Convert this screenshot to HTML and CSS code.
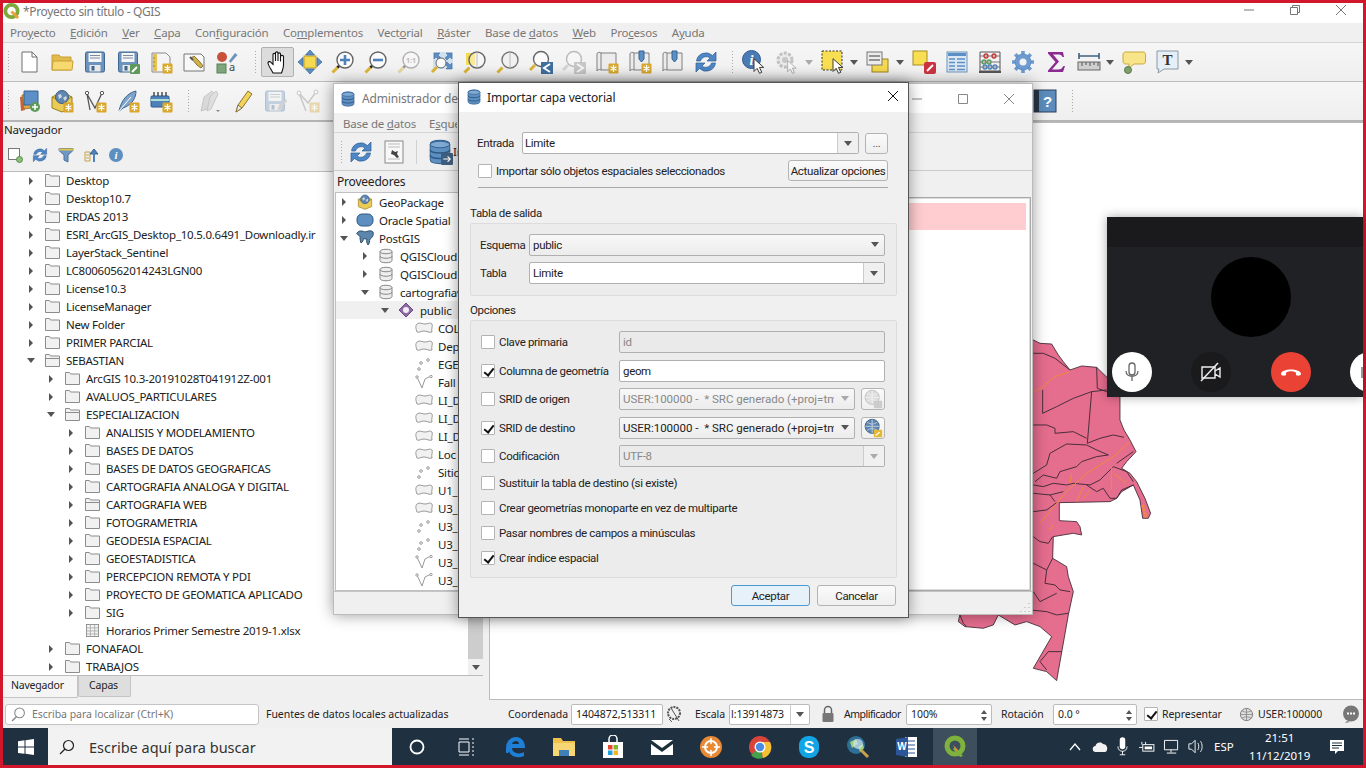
FILE: index.html
```html
<!DOCTYPE html>
<html lang="es">
<head>
    <meta charset="UTF-8">
    <title>*Proyecto sin título - QGIS</title>
    <link rel="stylesheet" href="styles.css">
</head>
<body>
<svg class="defs" xmlns="http://www.w3.org/2000/svg">
    <symbol id="badge-star" viewBox="0 0 24 24"><rect x="13.500" y="13.500" width="10" height="10" rx="1" fill="#d8a72c"/><path d="M18.500 15v7M15.500 16.700l6 3.600M21.500 16.700l-6 3.600" stroke="#fff" stroke-width="1.300"/></symbol>
    <symbol id="new" viewBox="0 0 24 24"><path d="M5 2h10l5 5v15H5z" fill="#fff" stroke="#6e6e6e"/><path d="M15 2v5h5" fill="none" stroke="#6e6e6e"/></symbol>
    <symbol id="open" viewBox="0 0 24 24"><path d="M2 20V5h7l2 2h10v13z" fill="#e3bb4b" stroke="#c79f36"/><path d="M2 20l1-9h19l1 0-1 9z" fill="#f6d96f" stroke="#c79f36"/></symbol>
    <symbol id="save" viewBox="0 0 24 24"><rect x="2.500" y="2" width="19" height="20" rx="1.500" fill="#6b93bd" stroke="#3f668f"/><rect x="5.500" y="3" width="13" height="9" fill="#f5f5f5"/><path d="M7 5.500h10M7 8h10" stroke="#7d8b99"/><rect x="6.500" y="15" width="11" height="6.500" fill="#e8e8e8"/><rect x="8.500" y="16" width="3" height="4.500" fill="#3f668f"/></symbol>
    <symbol id="saveas" viewBox="0 0 24 24"><use href="#save"/><rect x="14" y="14" width="10" height="10" rx="1" fill="#5f9a5a"/><path d="M16 22l5-5" stroke="#fff" stroke-width="1.800"/></symbol>
    <symbol id="layout-new" viewBox="0 0 24 24"><path d="M3 3h14l4 4v15H3z" fill="#f4f4f4" stroke="#8a8a8a"/><path d="M4 4h4v17H4z" fill="#e7c350"/><path d="M4 8h2M4 12h2M4 16h2" stroke="#a8862c"/><use href="#badge-star"/></symbol>
    <symbol id="layout-mgr" viewBox="0 0 24 24"><path d="M2 4h17l3 3v14H2z" fill="#f8f8f8" stroke="#777"/><path d="M9 8l6 7 4 3 2-2-3-4-6-6z" fill="#d2b24c" stroke="#8a7333"/><path d="M8 7l3 3" stroke="#555" stroke-width="2"/></symbol>
    <symbol id="hand" viewBox="0 0 24 24"><path d="M8 23C6 19 2.500 14.500 3 12.500 3.500 11 5.500 11.500 6.500 13L8 14.500V4.500C8 3 10.500 3 10.500 4.500V11 3C10.500 1.500 13 1.500 13 3V11 4C13 2.500 15.500 2.500 15.500 4V11.500 6.500C15.500 5 18.500 5 18.500 6.500V15C18.500 18 17.500 20 16.500 23Z" fill="#fff" stroke="#111" stroke-width="1.100"/></symbol>
    <symbol id="pan-sel" viewBox="0 0 24 24"><rect x="6" y="6" width="12" height="12" fill="#f5d94e" stroke="#b99c2c"/><path d="M12 0l4.500 5h-9zM12 24l4.500-5h-9zM0 12l5-4.500v9zM24 12l-5-4.500v9z" fill="#5d8fc7" stroke="#34628f" stroke-width=".7"/></symbol>
    <symbol id="lens" viewBox="0 0 24 24"><circle cx="14" cy="10" r="8" fill="#fbfbfb" stroke="#666" stroke-width="1.400"/><path d="M8 16l-2 2" stroke="#222" stroke-width="2.500"/><path d="M6.500 17.500L1.500 22.500" stroke="#d9b437" stroke-width="3"/></symbol>
    <symbol id="zoom-in" viewBox="0 0 24 24"><use href="#lens"/><path d="M14 5v10M9 10h10" stroke="#4f82bb" stroke-width="2.600"/></symbol>
    <symbol id="zoom-out" viewBox="0 0 24 24"><use href="#lens"/><path d="M9 10h10" stroke="#4f82bb" stroke-width="2.600"/></symbol>
    <symbol id="zoom-full" viewBox="0 0 24 24"><path d="M3 2h20v17H3z" fill="#cfe0f0"/><path d="M4 3h6l-2 2 3 3-2 2-3-3-2 2zM22 3h-6l2 2-3 3 2 2 3-3 2 2zM22 19h-6l2-2-3-3 2-2 3 3 2-2z" fill="#5d8fc7" stroke="#34628f" stroke-width=".5"/><circle cx="11" cy="13" r="5" fill="#fbfbfb" stroke="#666"/><path d="M7 17l-5 5" stroke="#d9b437" stroke-width="3"/></symbol>
    <symbol id="zoom-sel" viewBox="0 0 24 24"><rect x="3" y="3" width="9" height="12" fill="#f5d94e"/><circle cx="14" cy="10" r="8" fill="#fbfbfb" fill-opacity=".45" stroke="#666" stroke-width="1.400"/><path d="M14 2v16" stroke="#bbb"/><path d="M6.500 17.500L1.500 22.500" stroke="#d9b437" stroke-width="3"/></symbol>
    <symbol id="zoom-layer" viewBox="0 0 24 24"><circle cx="14" cy="10" r="8" fill="#f1f1f1" stroke="#777" stroke-width="1.400"/><path d="M14 2v16" stroke="#bbb"/><path d="M6.500 17.500L1.500 22.500" stroke="#d9b437" stroke-width="3"/></symbol>
    <symbol id="zoom-last" viewBox="0 0 24 24"><circle cx="12" cy="9" r="7.500" fill="#fbfbfb" stroke="#666" stroke-width="1.400"/><path d="M6 15L1 20" stroke="#d9b437" stroke-width="3"/><rect x="12" y="12" width="12" height="12" fill="#3f6f9f"/><path d="M21 14l-6 4 6 4" fill="none" stroke="#fff" stroke-width="2"/></symbol>
    <symbol id="zoom-next" viewBox="0 0 24 24"><g opacity=".4"><circle cx="12" cy="9" r="7.500" fill="#fbfbfb" stroke="#666" stroke-width="1.400"/><path d="M6 15L1 20" stroke="#aaa" stroke-width="3"/><rect x="12" y="12" width="12" height="12" fill="#888"/><path d="M15 14l6 4-6 4" fill="none" stroke="#fff" stroke-width="2"/></g></symbol>
    <symbol id="scroll" viewBox="0 0 24 24"><path d="M2 4c0-2 3-2 4-1h15v17H6c-2-1-4 0-4 1z" fill="#ececec" stroke="#808080"/><path d="M6 3v17" stroke="#808080"/></symbol>
    <symbol id="scroll-new" viewBox="0 0 24 24"><use href="#scroll"/><use href="#badge-star"/></symbol>
    <symbol id="scroll-pin" viewBox="0 0 24 24"><use href="#scroll"/><path d="M11 1h5v8l-2.500 3-2.500-3z" fill="#5d8fc7" stroke="#34628f"/></symbol>
    <symbol id="scroll-pin-new" viewBox="0 0 24 24"><use href="#scroll-pin"/><use href="#badge-star"/></symbol>
    <symbol id="refresh" viewBox="0 0 24 24"><g fill="#4f86c6" stroke="#2f5f96" stroke-width=".7"><path id="rf-arc" d="M2.500 11A9.500 9.500 0 0 1 18.500 5.500L22 2v9h-9l3-3A6 6 0 0 0 6.500 11z"/><use href="#rf-arc" transform="rotate(180 12 12)"/></g></symbol>
    <symbol id="cursor" viewBox="0 0 12 17"><path d="M.7.7v13.600L4 11l2.500 5.300 2.500-1.100L6.500 10H11z" fill="#fff" stroke="#333"/></symbol>
    <symbol id="cog-cursor" viewBox="0 0 24 24"><g opacity=".4"><circle cx="10" cy="10" r="7" fill="#ddd" stroke="#777" stroke-width="3" stroke-dasharray="3 1.500"/><circle cx="10" cy="10" r="3" fill="#888"/><use href="#cursor" x="12" y="10" width="10" height="14"/></g></symbol>
    <symbol id="select" viewBox="0 0 24 24"><rect x="1" y="1" width="20" height="19" fill="#f7de52" stroke="#333" stroke-dasharray="2 1.500"/><use href="#cursor" x="11" y="8" width="12" height="16"/></symbol>
    <symbol id="attr-select" viewBox="0 0 24 24"><rect x="6" y="9" width="16" height="13" fill="#f5d94e" stroke="#9a8420"/><rect x="1" y="2" width="15" height="13" fill="#ececec" stroke="#777"/><path d="M3 6h11M3 10h11" stroke="#777" stroke-width="1.500"/></symbol>
    <symbol id="deselect" viewBox="0 0 24 24"><rect x="1" y="1" width="14" height="14" fill="#f7de52" stroke="#a68c22"/><rect x="12" y="12" width="12" height="12" rx="2" fill="#cb3340"/><path d="M15 21l6-6" stroke="#fff" stroke-width="2"/></symbol>
    <symbol id="table" viewBox="0 0 24 24"><rect x="2" y="2" width="20" height="20" fill="#dbe7f2" stroke="#6c93bb"/><path d="M3 3h18v3H3z" fill="#5d8fc7"/><path d="M4 9h6M4 12.500h6M4 16h6M4 19.500h6M12 9h8M12 12.500h8M12 16h8M12 19.500h8" stroke="#5d8fc7" stroke-width="1.300"/></symbol>
    <symbol id="calc" viewBox="0 0 24 24"><path d="M2 2h20v19H2z" fill="none" stroke="#555"/><path d="M1 22h22" stroke="#555" stroke-width="2"/><path d="M2 6h20M2 12h20M2 17h20" stroke="#777"/><g fill="none" stroke-width="1.300"><circle cx="8" cy="6" r="2" stroke="#c33"/><circle cx="16" cy="6" r="2" stroke="#c33"/><circle cx="6" cy="12" r="2" stroke="#5a9a5a"/><circle cx="11" cy="12" r="2" stroke="#5a9a5a"/><circle cx="7" cy="17" r="2" stroke="#4f82bb"/><circle cx="12" cy="17" r="2" stroke="#4f82bb"/><circle cx="17" cy="17" r="2" stroke="#4f82bb"/></g></symbol>
    <symbol id="gear" viewBox="0 0 24 24"><path d="M12 1v22M1 12h22M4.200 4.200l15.600 15.600M4.200 19.800L19.800 4.200" stroke="#6f9bd0" stroke-width="3.600"/><circle cx="12" cy="12" r="8" fill="#6f9bd0" stroke="#4f7fb8" stroke-width=".6"/><circle cx="12" cy="12" r="3.500" fill="#f2f2f2"/></symbol>
    <symbol id="sigma" viewBox="0 0 24 24"><path d="M4 2h15l1 5h-1.500c-1-2-2-2.500-5-2.500H9l6 7-7 8h6c3 0 4-1 5.500-3.500H21L19 22H4v-1.500l7.500-8.500L4 3.500z" fill="#8c2a92"/></symbol>
    <symbol id="ruler" viewBox="0 0 24 24"><path d="M2 6h20M2 3v6M22 3v6" stroke="#3f5f7f" stroke-width="1.600"/><rect x="1" y="12" width="22" height="8" fill="#cfcfcf" stroke="#666"/><path d="M5 12v4M9 12v3M13 12v4M17 12v3M21 12v4" stroke="#555"/></symbol>
    <symbol id="tip" viewBox="0 0 24 24"><path d="M4 2h17c2 0 2.500 1 2.500 3v6c0 2-1 3-3 3H12l-5 4v-4H4c-2 0-3-1-3-3V5c0-2 1-3 3-3z" fill="#f8e58a" stroke="#c9a93c"/><circle cx="6" cy="20" r="3.500" fill="#7fa06a" stroke="#5a7a4a"/></symbol>
    <symbol id="ds-mgr" viewBox="0 0 24 24"><path d="M3 8l5-1 0 14-4 1z" fill="#c9603a"/><path d="M5 6l13-1 2 13-13 2z" fill="#e0a94a" stroke="#a9782c"/><path d="M7 2l14 0 0 14-14 0z" fill="#5d8fc7" stroke="#34628f"/><circle cx="18" cy="18" r="5" fill="#5f9a5a"/><path d="M18 15v6M15 18h6" stroke="#fff" stroke-width="1.500"/></symbol>
    <symbol id="gpkg" viewBox="0 0 24 24"><path d="M12 3l10 5v11l-10 4-10-4V8z" fill="#e9cb55" stroke="#9a7f22"/><path d="M2 8l10 5 10-5" fill="none" stroke="#9a7f22"/><circle cx="12" cy="8" r="6.500" fill="#5f86b3" stroke="#3f5f80"/><path d="M8 6l3-1 1 3-3 2zM13 9l3-2 1 2-2 3z" fill="#cfd8de"/></symbol>
    <symbol id="gpkg-new" viewBox="0 0 24 24"><use href="#gpkg"/><use href="#badge-star"/></symbol>
    <symbol id="mesh" viewBox="0 0 24 24"><path d="M7 21L4 5l8 14L19 4" fill="none" stroke="#555" stroke-width="1.300"/><circle cx="4" cy="4" r="1.700" fill="#fff" stroke="#555"/><circle cx="19" cy="4" r="1.700" fill="#fff" stroke="#555"/><use href="#badge-star"/></symbol>
    <symbol id="feather" viewBox="0 0 24 24"><path d="M3 22C5 12 11 4 20 2c0 7-4 14-13 17z" fill="#7ea4cc" stroke="#3f668f"/><path d="M3 22L15 8" stroke="#fff"/><use href="#badge-star"/></symbol>
    <symbol id="chip" viewBox="0 0 24 24"><rect x="2" y="7" width="18" height="11" rx="1" fill="#4f82bb" stroke="#2f5a8d"/><path d="M2 11h18" stroke="#cfd" stroke-width="1.500"/><path d="M5 3v4M9 3v4M13 3v4M17 3v4" stroke="#333" stroke-width="1.300"/><use href="#badge-star"/></symbol>
    <symbol id="pencils" viewBox="0 0 24 24"><g opacity=".35"><path d="M4 22l3-14 8-6 2 3-7 15z" fill="#aaa" stroke="#777"/><path d="M10 22l3-14 6-6 2 3-7 15z" fill="#bbb" stroke="#777"/></g><path d="M19 21l2 2 2-2z" fill="#888"/></symbol>
    <symbol id="pencil" viewBox="0 0 24 24"><path d="M6 23l2-7L18 2l4 3-10 14z" fill="#f3d35a" stroke="#8a7333"/><path d="M6 23l2-7 4 3z" fill="#eee" stroke="#8a7333"/></symbol>
    <symbol id="save-edit" viewBox="0 0 24 24"><g opacity=".35"><use href="#save"/><path d="M14 22l2-6 7-6 1 2-6 8z" fill="#999"/></g></symbol>
    <symbol id="vertex" viewBox="0 0 24 24"><g opacity=".35"><path d="M10 22L3 4l9 10 8-11" fill="none" stroke="#777" stroke-width="1.400"/><circle cx="3" cy="4" r="2" fill="#fff" stroke="#777"/><circle cx="20" cy="3" r="2" fill="#fff" stroke="#777"/><use href="#badge-star"/></g></symbol>
    <symbol id="db" viewBox="0 0 24 24"><path d="M3 5c0-5 18-5 18 0v14c0 5-18 5-18 0z" fill="#5d8fc0" stroke="#3a6796"/><ellipse cx="12" cy="5" rx="9" ry="3" fill="#7faad4" stroke="#3a6796"/><path d="M3 10c0 4 18 4 18 0M3 15c0 4 18 4 18 0" fill="none" stroke="#2f5a85" stroke-width="1.400"/></symbol>
    <symbol id="db-import" viewBox="0 0 24 24"><use href="#db"/><rect x="13" y="13" width="11" height="11" rx="1" fill="#3f5f7f"/><path d="M15 18.500h6M19 16l2.500 2.500L19 21" fill="none" stroke="#fff"/></symbol>
    <symbol id="props" viewBox="0 0 24 24"><rect x="3" y="1" width="18" height="22" fill="#f8f8f8" stroke="#888"/><path d="M6 4h12M6 7h12M6 19h12" stroke="#bbb"/><path d="M10 10l3 2 3-1-1 3 2 3-2 1-3-3-3-1z" fill="#444"/></symbol>
    <symbol id="fold" viewBox="0 0 15 13"><path d="M.5 12.500V.5h4l1 1.500h9v10.500z" fill="#f1f1f1" stroke="#8c8c8c"/></symbol>
    <symbol id="fold-open" viewBox="0 0 15 13"><path d="M.5 12.500V.5h4l1 1.500h9v10.500z" fill="#f1f1f1" stroke="#8c8c8c"/><path d="M.5 4.500h14" stroke="#8c8c8c"/></symbol>
    <symbol id="sheet" viewBox="0 0 15 15"><rect x=".5" y=".5" width="14" height="14" fill="#f4f4f4" stroke="#888"/><path d="M1 4.500h13M1 8h13M1 11.500h13M5 1v13M10 1v13" stroke="#aaa"/></symbol>
    <symbol id="cyl" viewBox="0 0 16 16"><path d="M2 3.500c0-3 12-3 12 0v9c0 3-12 3-12 0z" fill="#eee" stroke="#888"/><path d="M2 3.500c0 3 12 3 12 0M2 8c0 3 12 3 12 0" fill="none" stroke="#888"/></symbol>
    <symbol id="poly" viewBox="0 0 18 14"><path d="M2 3c3-2 5 0 8 0s5-2 7 0c1 2-1 5 0 8-3 1-5-1-8-1s-5 2-7 1C1 8 0 5 2 3z" fill="#f1f1f1" stroke="#999"/></symbol>
    <symbol id="pts" viewBox="0 0 18 14"><g fill="#fff" stroke="#999"><circle cx="4" cy="12" r="1.300"/><circle cx="6" cy="6" r="1.300"/><circle cx="13" cy="3" r="1.300"/></g></symbol>
    <symbol id="line" viewBox="0 0 18 14"><path d="M2 2l5 11 3-9 6-3" fill="none" stroke="#999"/><circle cx="2" cy="2" r="1.200" fill="#fff" stroke="#999"/><circle cx="16" cy="1.500" r="1.200" fill="#fff" stroke="#999"/></symbol>
    <symbol id="oracle" viewBox="0 0 18 14"><rect x="1" y="1" width="16" height="12" rx="5" fill="#5d8fc0" stroke="#2f5a85"/></symbol>
    <symbol id="pg" viewBox="0 0 18 16"><path d="M1 3c2-3 6-2 8-1 3-1 6-2 8 0 1 3-1 6-3 7-1 2 0 4-2 6-1-2-2-4-1-6-2 0-3 0-3-1-1 2-1 4-3 5-1-3-1-5-1-7-2-1-4-2-3-3z" fill="#5d86ad" stroke="#2f4f70"/></symbol>
    <symbol id="schema" viewBox="0 0 16 16"><path d="M8 1l7 7-7 7-7-7z" fill="#8e6aa6" stroke="#6a4a80"/><circle cx="8" cy="8" r="3" fill="#f2ecf5"/></symbol>
    <symbol id="globe-pen" viewBox="0 0 24 24"><circle cx="11" cy="10" r="8.500" fill="#5f86b3" stroke="#3f5f80"/><path d="M3 10h17M11 2v16M5 5c4 3 8 3 12 0M5 15c4-3 8-3 12 0" fill="none" stroke="#cfd8de"/><rect x="13" y="14" width="10" height="9" rx="1" fill="#e4b92f"/><path d="M15 21l5-4" stroke="#fff" stroke-width="1.500"/></symbol>
    <symbol id="globe-gray" viewBox="0 0 24 24"><circle cx="11" cy="10" r="8.500" fill="#ddd" stroke="#bbb"/><path d="M3 10h17M11 2v16M5 5c4 3 8 3 12 0M5 15c4-3 8-3 12 0" fill="none" stroke="#f2f2f2"/><rect x="13" y="14" width="10" height="9" rx="1" fill="#ccc"/></symbol>
</svg>

<div class="screen">
    <header class="titlebar">
        <svg class="app-logo" viewBox="0 0 18 18"><circle cx="9" cy="8.500" r="6.500" fill="none" stroke="#7da83a" stroke-width="4"/><path d="M9 9l7 7" stroke="#e8a33a" stroke-width="3"/></svg>
        <span class="app-title">*Proyecto sin título - QGIS</span>
        <div class="win-btns">
            <svg class="main-ctl" viewBox="0 3 46 17"><path d="M18 10h10" stroke="#777"/></svg>
            <svg class="main-ctl" viewBox="0 3 46 17"><path d="M18.500 7.500h7v7h-7zM20.500 7.500v-2h7v7h-2" fill="none" stroke="#777"/></svg>
            <svg class="main-ctl" viewBox="0 3 46 17"><path d="M18 5l10 10M28 5L18 15" stroke="#777"/></svg>
        </div>
    </header>

    <nav class="menubar">
        <span>Pro<u>y</u>ecto</span><span><u>E</u>dición</span><span><u>V</u>er</span><span><u>C</u>apa</span><span>Con<u>f</u>iguración</span><span>Co<u>m</u>plementos</span><span>Vect<u>o</u>rial</span><span><u>R</u>áster</span><span>Base de <u>d</u>atos</span><span><u>W</u>eb</span><span>Pro<u>c</u>esos</span><span>A<u>y</u>uda</span>
    </nav>

    <div class="toolbar">
        <i class="grip"></i>
        <b class="tb"><svg><use href="#new"/></svg></b>
        <b class="tb"><svg><use href="#open"/></svg></b>
        <b class="tb"><svg><use href="#save"/></svg></b>
        <b class="tb"><svg><use href="#saveas"/></svg></b>
        <b class="tb"><svg><use href="#layout-new"/></svg></b>
        <b class="tb"><svg><use href="#layout-mgr"/></svg></b>
        <b class="tb"><svg viewBox="0 0 24 24"><circle cx="7" cy="7" r="5" fill="#c9503a"/><path d="M14 11l6-8 2.500 2-7 8z" fill="#6b93bd"/><rect x="2" y="14" width="9" height="9" fill="#7ea67a" stroke="#59805a"/><text x="14" y="21" class="sv-a">a</text></svg></b>
        <i class="grip grip-mid"></i>
        <b class="tb tb-on"><svg><use href="#hand"/></svg></b>
        <b class="tb"><svg><use href="#pan-sel"/></svg></b>
        <b class="tb"><svg><use href="#zoom-in"/></svg></b>
        <b class="tb"><svg><use href="#zoom-out"/></svg></b>
        <b class="tb"><svg viewBox="0 0 24 24"><g opacity=".45"><use href="#lens"/><text x="14" y="13" class="sv-t">1:1</text></g></svg></b>
        <b class="tb"><svg><use href="#zoom-full"/></svg></b>
        <b class="tb"><svg><use href="#zoom-sel"/></svg></b>
        <b class="tb"><svg><use href="#zoom-layer"/></svg></b>
        <b class="tb"><svg><use href="#zoom-last"/></svg></b>
        <b class="tb"><svg><use href="#zoom-next"/></svg></b>
        <b class="tb"><svg><use href="#scroll-new"/></svg></b>
        <b class="tb"><svg><use href="#scroll-pin-new"/></svg></b>
        <b class="tb"><svg><use href="#scroll-pin"/></svg></b>
        <b class="tb"><svg><use href="#refresh"/></svg></b>
        <i class="grip grip-end"></i>
        <b class="tb"><svg viewBox="0 0 24 24"><circle cx="9.500" cy="9.500" r="9" fill="#4b7bb5" stroke="#2f5a8d"/><text x="9.500" y="15" class="sv-i">i</text><use href="#cursor" x="11" y="8" width="12" height="16"/></svg></b>
        <b class="tb"><svg><use href="#cog-cursor"/></svg></b><i class="drop drop-off"></i>
        <b class="tb"><svg><use href="#select"/></svg></b><i class="drop"></i>
        <b class="tb"><svg><use href="#attr-select"/></svg></b><i class="drop"></i>
        <b class="tb"><svg><use href="#deselect"/></svg></b>
        <b class="tb"><svg><use href="#table"/></svg></b>
        <b class="tb"><svg><use href="#calc"/></svg></b>
        <b class="tb"><svg><use href="#gear"/></svg></b>
        <b class="tb"><svg><use href="#sigma"/></svg></b>
        <b class="tb"><svg><use href="#ruler"/></svg></b><i class="drop"></i>
        <b class="tb"><svg><use href="#tip"/></svg></b>
        <b class="tb"><svg viewBox="0 0 24 24"><path d="M2 1h21v18H9l-6 4 1-4H2z" fill="#e6eef6" stroke="#8a9aa8"/><text x="12.500" y="15" class="sv-t2">T</text></svg></b><i class="drop"></i>
    </div>

    <div class="toolbar toolbar-2">
        <i class="grip"></i>
        <b class="tb"><svg><use href="#ds-mgr"/></svg></b>
        <b class="tb"><svg><use href="#gpkg-new"/></svg></b>
        <b class="tb"><svg><use href="#mesh"/></svg></b>
        <b class="tb"><svg><use href="#feather"/></svg></b>
        <b class="tb"><svg><use href="#chip"/></svg></b>
        <i class="grip grip-sm"></i>
        <b class="tb"><svg><use href="#pencils"/></svg></b>
        <b class="tb"><svg><use href="#pencil"/></svg></b>
        <b class="tb"><svg><use href="#save-edit"/></svg></b>
        <b class="tb"><svg><use href="#vertex"/></svg></b>
        <span class="tb-gap"></span>
        <b class="tb"><svg viewBox="0 0 24 24"><rect x="1" y="1" width="22" height="22" fill="#5c8cbd" stroke="#2b4058"/><rect x="1" y="1" width="5" height="22" fill="#263646"/><text x="14.500" y="18" class="sv-q">?</text></svg></b>
        <i class="grip grip-sm"></i>
    </div>

    <main class="workspace">
        <aside class="side">
            <div class="side-title">Navegador</div>
            <div class="side-tools">
                <svg viewBox="0 0 16 16"><rect x="1.500" y="1.500" width="11" height="11" fill="#fff" stroke="#777"/><circle cx="12.500" cy="12.500" r="3" fill="#8cc07a" stroke="#5a8a4a"/></svg>
                <svg viewBox="0 0 24 24"><use href="#refresh"/></svg>
                <svg viewBox="0 0 16 16"><path d="M1 1.500h14v2L10 8v7l-4-2V8L1 3.500z" fill="#6f98c4" stroke="#4a739f"/><path d="M1 1.500h14v2H1z" fill="#e4c64e"/></svg>
                <svg viewBox="0 0 16 16"><path d="M2 5h5v9H2zM3 8h3M3 11h3" fill="none" stroke="#c6a04a"/><path d="M11 15V6M7 7l4-5 4 5z" fill="#4f82bb" stroke="#34628f"/><path d="M10 15h2V6h-2z" fill="#4f82bb"/></svg>
                <svg viewBox="0 0 16 16"><circle cx="8" cy="8" r="7" fill="#5d8fc0"/><text x="8" y="12" class="sv-i2">i</text></svg>
            </div>
            <div class="tree-wrap">
                <div class="tree">
                    <div class="row lv0"><i class="arr"></i><svg class="fo"><use href="#fold"/></svg>Desktop</div>
                    <div class="row lv0"><i class="arr"></i><svg class="fo"><use href="#fold"/></svg>Desktop10.7</div>
                    <div class="row lv0"><i class="arr"></i><svg class="fo"><use href="#fold"/></svg>ERDAS 2013</div>
                    <div class="row lv0"><i class="arr"></i><svg class="fo"><use href="#fold"/></svg>ESRI_ArcGIS_Desktop_10.5.0.6491_Downloadly.ir</div>
                    <div class="row lv0"><i class="arr"></i><svg class="fo"><use href="#fold"/></svg>LayerStack_Sentinel</div>
                    <div class="row lv0"><i class="arr"></i><svg class="fo"><use href="#fold"/></svg>LC80060562014243LGN00</div>
                    <div class="row lv0"><i class="arr"></i><svg class="fo"><use href="#fold"/></svg>License10.3</div>
                    <div class="row lv0"><i class="arr"></i><svg class="fo"><use href="#fold"/></svg>LicenseManager</div>
                    <div class="row lv0"><i class="arr"></i><svg class="fo"><use href="#fold"/></svg>New Folder</div>
                    <div class="row lv0"><i class="arr"></i><svg class="fo"><use href="#fold"/></svg>PRIMER PARCIAL</div>
                    <div class="row lv0"><i class="arr arr-open"></i><svg class="fo"><use href="#fold-open"/></svg>SEBASTIAN</div>
                    <div class="row lv1"><i class="arr"></i><svg class="fo"><use href="#fold"/></svg>ArcGIS 10.3-20191028T041912Z-001</div>
                    <div class="row lv1"><i class="arr"></i><svg class="fo"><use href="#fold"/></svg>AVALUOS_PARTICULARES</div>
                    <div class="row lv1"><i class="arr arr-open"></i><svg class="fo"><use href="#fold-open"/></svg>ESPECIALIZACION</div>
                    <div class="row lv2"><i class="arr"></i><svg class="fo"><use href="#fold"/></svg>ANALISIS Y MODELAMIENTO</div>
                    <div class="row lv2"><i class="arr"></i><svg class="fo"><use href="#fold"/></svg>BASES DE DATOS</div>
                    <div class="row lv2"><i class="arr"></i><svg class="fo"><use href="#fold"/></svg>BASES DE DATOS GEOGRAFICAS</div>
                    <div class="row lv2"><i class="arr"></i><svg class="fo"><use href="#fold"/></svg>CARTOGRAFIA ANALOGA Y DIGITAL</div>
                    <div class="row lv2"><i class="arr"></i><svg class="fo"><use href="#fold-open"/></svg>CARTOGRAFIA WEB</div>
                    <div class="row lv2"><i class="arr"></i><svg class="fo"><use href="#fold"/></svg>FOTOGRAMETRIA</div>
                    <div class="row lv2"><i class="arr"></i><svg class="fo"><use href="#fold"/></svg>GEODESIA ESPACIAL</div>
                    <div class="row lv2"><i class="arr"></i><svg class="fo"><use href="#fold"/></svg>GEOESTADISTICA</div>
                    <div class="row lv2"><i class="arr"></i><svg class="fo"><use href="#fold"/></svg>PERCEPCION REMOTA Y PDI</div>
                    <div class="row lv2"><i class="arr"></i><svg class="fo"><use href="#fold"/></svg>PROYECTO DE GEOMATICA APLICADO</div>
                    <div class="row lv2"><i class="arr"></i><svg class="fo"><use href="#fold"/></svg>SIG</div>
                    <div class="row lv2"><i class="arr arr-none"></i><svg class="fo"><use href="#sheet"/></svg>Horarios Primer Semestre 2019-1.xlsx</div>
                    <div class="row lv1"><i class="arr"></i><svg class="fo"><use href="#fold"/></svg>FONAFAOL</div>
                    <div class="row lv1"><i class="arr"></i><svg class="fo"><use href="#fold"/></svg>TRABAJOS</div>
                </div>
                <div class="vscroll"><span class="thumb"></span><span class="vscroll-btn"><i class="drop-mini"></i></span></div>
            </div>
            <div class="tabs"><span class="tab tab-on">Navegador</span><span class="tab">Capas</span></div>
        </aside>

        <section class="map">
            <svg class="map-svg" viewBox="489 122 874 578">
                <g transform="translate(900 190) scale(.3333)">
                    <path class="dept" d="M300 400L400 450 420 460 455 462 475 495 490 515 510 540 545 528 590 532 660 600 660 690 672 720 690 750 708 785 680 815 665 835 690 850 710 875 735 925 752 970 745 985 728 985 720 930 700 885 665 905 650 925 630 935 478 938 478 992 530 995 540 1010 545 1035 520 1030 490 1035 460 1040 458 1105 500 1130 505 1160 520 1205 505 1275 470 1472 440 1445 400 1435 455 1340 420 1310 380 1295 345 1305 295 1275 280 1305 250 1315 195 1310 175 1295 180 1272Z"/>
                    <g class="limits">
                        <path d="M400 490L430 490 465 505 510 540"/>
                        <path d="M590 532L592 595 620 605 660 605"/>
                        <path d="M428 600V670L470 650 520 625 575 605 620 600"/>
                        <path d="M575 605L562 760"/>
                        <path d="M400 705L440 705 465 715 465 730 520 725 560 745"/>
                        <path d="M562 760L600 745 640 735 672 742"/>
                        <path d="M400 850L440 825 450 790 500 762 560 765 590 780 625 795"/>
                        <path d="M625 795L590 800 545 815 530 830 480 845 470 865 430 855 405 875"/>
                        <path d="M400 885L430 890 460 880 500 885 520 880 570 885 600 870 640 830"/>
                        <path d="M560 885L590 905 610 895 630 925 650 925 665 900 700 885"/>
                        <path d="M640 830L680 845 700 875"/>
                        <path d="M650 820L700 785"/>
                        <path d="M400 910L450 915 490 905"/>
                        <path d="M450 915L465 935"/>
                        <path d="M400 965L440 960 470 938"/>
                        <path d="M400 1040L420 1055 445 1060 458 1040"/>
                        <path d="M400 1120L440 1140 458 1105"/>
                        <path d="M440 1140L435 1180 465 1185 480 1200 510 1205"/>
                        <path d="M400 1205L420 1235 470 1210"/>
                        <path d="M390 1260L440 1265 470 1275 505 1270"/>
                        <path d="M180 1275L190 1300 200 1310"/>
                        <path d="M420 1415L445 1385 485 1385M420 1415L440 1440"/>
                    </g>
                    <g class="rivers">
                        <path d="M400 605L430 590 465 560 510 545"/>
                        <path d="M690 755L640 800 560 850 500 905 470 940 420 1000"/>
                        <path d="M515 850L510 880M550 890L530 935M570 900L550 925"/>
                        <path d="M635 830V900M640 850L680 880M460 1005L450 1020"/>
                        <path class="river-thick" d="M728 945L738 982"/>
                    </g>
                </g>
            </svg>
        </section>
    </main>

    <footer class="statusbar">
        <div class="locator">
            <svg viewBox="0 0 14 14"><circle cx="8" cy="5.500" r="4.500" fill="none" stroke="#888"/><path d="M5 9l-4 4" stroke="#888" stroke-width="1.300"/></svg>
            Escriba para localizar (Ctrl+K)
        </div>
        <span class="st-msg">Fuentes de datos locales actualizadas</span>
        <span class="st-coord">Coordenada</span>
        <span class="st-input st-input-coord">1404872,513311</span>
        <svg class="st-ico" viewBox="0 0 18 18"><circle cx="9" cy="8" r="6" fill="none" stroke="#555" stroke-width="2" stroke-dasharray="2 1"/><path d="M6 3l8 13M4 14l3 3" stroke="#555"/></svg>
        <span class="st-scale">Escala</span>
        <span class="st-input st-input-scale">l:13914873<i class="st-drop"><i class="drop-mini"></i></i></span>
        <svg class="st-lock" viewBox="0 0 14 18"><path d="M3.500 8V5a3.500 3.500 0 0 1 7 0v3" fill="none" stroke="#666" stroke-width="1.500"/><rect x="1.500" y="8" width="11" height="9" rx="1" fill="#777"/></svg>
        <span class="st-amp">Amplificador</span>
        <span class="st-input st-input-mag">100%<i class="spin"></i></span>
        <span class="st-rot">Rotación</span>
        <span class="st-input st-input-rot">0.0 °<i class="spin"></i></span>
        <span class="check check-st is-on"></span>
        <span class="st-render">Representar</span>
        <svg class="st-globe" viewBox="0 0 16 16"><circle cx="8" cy="8" r="6.500" fill="#ddd" stroke="#777"/><path d="M1.500 8h13M8 1.500v13M3 4c3 2 7 2 10 0M3 12c3-2 7-2 10 0" fill="none" stroke="#777" stroke-width=".7"/></svg>
        <span class="st-crs">USER:100000</span>
        <svg class="st-msgicon" viewBox="0 0 18 18"><circle cx="9" cy="8.500" r="8" fill="#777"/><path d="M5 16l-2 2 5-1z" fill="#777"/><path d="M5 8.500h2M8 8.500h2M11 8.500h2" stroke="#fff" stroke-width="1.800"/></svg>
    </footer>

    <div class="taskbar">
        <div class="start"><svg viewBox="0 0 16 16"><path d="M0 2.200l6.500-.9v6.300H0zM7.500 1.200L16 0v7.600H7.500zM0 8.500h6.500v6.300L0 13.900zM7.500 8.500H16V16l-8.500-1.200z" fill="#fff"/></svg></div>
        <div class="search">
            <svg viewBox="0 0 16 16"><circle cx="9.500" cy="6.500" r="5" fill="none" stroke="#222" stroke-width="1.200"/><path d="M6 10l-5 5" stroke="#222" stroke-width="1.200"/></svg>
            Escribe aquí para buscar
        </div>
        <div class="task-apps">
            <b class="app"><svg viewBox="0 0 20 20"><circle cx="10" cy="10" r="6.500" fill="none" stroke="#fff" stroke-width="1.800"/></svg></b>
            <b class="app"><svg viewBox="0 0 20 20"><path d="M3 2h10M3 18h10M3 5h10v10H3zM16 2h2M16 6h2M16 10h2M16 14h2M16 18h2" fill="none" stroke="#fff"/></svg></b>
            <b class="app"><svg viewBox="0 0 24 24"><path d="M3 13C3 6 8 2 13 2c6 0 9 5 9 11H9c0 5 7 7 12 4v4c-7 3-14 0-15-5 0 2-1 2-3 2zM9 9h7c0-4-6-4-7 0z" fill="#1e7fd6"/></svg></b>
            <b class="app"><svg viewBox="0 0 24 24"><path d="M1 3h8l2 3h12v15H1z" fill="#f0c14b"/><path d="M1 8h22v13H1z" fill="#f7d675"/><path d="M7 15h10v6H7z" fill="#3f80b8"/></svg></b>
            <b class="app"><svg viewBox="0 0 24 24"><path d="M2 7h20v16H2z" fill="#fff"/><path d="M8 8V4a4 4 0 0 1 8 0v4" fill="none" stroke="#fff" stroke-width="1.500"/><path d="M7 10h4.500v4.500H7z" fill="#e2492f"/><path d="M12.500 10H17v4.500h-4.500z" fill="#7fba2c"/><path d="M7 15.500h4.500V20H7z" fill="#1fa0e0"/><path d="M12.500 15.500H17V20h-4.500z" fill="#f7b719"/></svg></b>
            <b class="app"><svg viewBox="0 0 24 24"><path d="M1 5h22v15H1z" fill="#fff"/><path d="M1 5l11 8 11-8v4L12 17 1 9z" fill="#1d2f3b"/></svg></b>
            <b class="app"><svg viewBox="0 0 24 24"><circle cx="12" cy="12" r="11" fill="#e88a35"/><circle cx="12" cy="12" r="6" fill="none" stroke="#fff" stroke-width="2"/><path d="M12 3v18M3 12h18" stroke="#fff" stroke-width="1.500"/><circle cx="12" cy="12" r="3" fill="#e88a35"/></svg></b>
            <b class="app"><svg viewBox="0 0 24 24"><circle cx="12" cy="12" r="11" fill="#d9433a"/><path d="M12 12L3 20a11 11 0 0 0 12 3z" fill="#47a04c"/><path d="M12 7h10a11 11 0 0 1-7 16z" fill="#f3c131"/><circle cx="12" cy="12" r="5.500" fill="#fff"/><circle cx="12" cy="12" r="4.200" fill="#4a8ae0"/></svg></b>
            <b class="app"><svg viewBox="0 0 24 24"><rect x="2" y="1" width="20" height="22" rx="9" fill="#12a5e6"/><text x="12" y="18" class="sv-s">S</text></svg></b>
            <b class="app"><svg viewBox="0 0 24 24"><circle cx="10" cy="10" r="9" fill="#2f6f95"/><path d="M4 7l6-3 2 5-6 4zM12 12l5-3 1 4-4 4z" fill="#9ed07a"/><circle cx="12" cy="9" r="5" fill="#cfe6f2" opacity=".7"/><path d="M15 15l7 7" stroke="#c9a24a" stroke-width="3"/></svg></b>
            <b class="app"><svg viewBox="0 0 24 24"><path d="M10 2h12v20H10z" fill="#fff"/><path d="M12 6h8M12 10h8M12 14h8M12 18h8" stroke="#2b579a"/><path d="M1 4l12-2v20L1 20z" fill="#2b579a"/><text x="7" y="15" class="sv-w">W</text></svg></b>
            <b class="app app-on"><svg viewBox="0 0 24 24"><circle cx="12" cy="11" r="8" fill="none" stroke="#7fb23c" stroke-width="5"/><path d="M12 12l8 9-3 1-7-8z" fill="#7fb23c"/><path d="M10 10l5 5-2 1z" fill="#e88a35"/></svg></b>
        </div>
        <div class="tray">
            <svg class="t-caret" viewBox="0 0 12 8"><path d="M1 7l5-6 5 6" fill="none" stroke="#fff" stroke-width="1.300"/></svg>
            <svg class="t-cloud" viewBox="0 0 16 12"><path d="M4 11a3 3 0 0 1-.5-6C4 2 8 0 11 3c3 0 5 3 4 6-.5 2-2 2-3 2z" fill="#f2f2f2"/></svg>
            <svg class="t-mic" viewBox="0 0 12 20"><rect x="3" y="0" width="6" height="13" rx="3" fill="#fff"/><path d="M1 10c0 7 10 7 10 0M6 15v4M3 19h6" fill="none" stroke="#fff"/></svg>
            <svg class="t-batt" viewBox="0 0 18 14"><path d="M4 2v3M8 2v3" stroke="#fff"/><rect x="5" y="5" width="12" height="7" fill="none" stroke="#fff"/><rect x="7" y="7" width="8" height="3" fill="#fff"/><path d="M1 8h4" stroke="#fff"/></svg>
            <svg class="t-net" viewBox="0 0 18 16"><path d="M1.500 1.500h14v10h-14zM8.500 11.500v3M4 15h10" fill="none" stroke="#fff"/></svg>
            <svg class="t-vol" viewBox="0 0 18 16"><path d="M1 5h3l4-4v14l-4-4H1z" fill="none" stroke="#fff"/><path d="M11 4c1.500 2 1.500 6 0 8M14 2c2.500 3 2.500 9 0 12" fill="none" stroke="#fff"/></svg>
            <span class="t-lang">ESP</span>
            <div class="clock"><span>21:51</span><span>11/12/2019</span></div>
            <svg class="t-note" viewBox="0 0 16 16"><path d="M1 1h14v11H9l-3 3v-3H1z" fill="#fff"/><path d="M3 4h10M3 6.500h10M3 9h7" stroke="#1d2f3b"/></svg>
        </div>
    </div>

    <section class="window admin">
        <div class="win-title win-title-dim">
            <svg class="win-ico"><use href="#db"/></svg><span class="admin-name">Administrador de BD</span>
            <div class="admin-ctls">
                <svg class="win-ctl" viewBox="0 0 46 20"><path d="M18 10h10" stroke="#888"/></svg>
                <svg class="win-ctl" viewBox="0 0 46 20"><path d="M18.500 5.500h9v9h-9z" fill="none" stroke="#888"/></svg>
                <svg class="win-ctl" viewBox="0 0 46 20"><path d="M18 5l10 10M28 5L18 15" stroke="#888"/></svg>
            </div>
        </div>
        <div class="admin-menu"><span>Base de <u>d</u>atos</span><span class="admin-esq">E<u>s</u>quema</span></div>
        <div class="admin-tools">
            <i class="grip"></i>
            <svg class="at-ico"><use href="#refresh"/></svg>
            <svg class="at-ico at-props"><use href="#props"/></svg>
            <i class="at-sep"></i>
            <svg class="at-ico at-db"><use href="#db-import"/></svg>
            <span class="at-label">Importar</span>
        </div>
        <div class="admin-body">
            <div class="providers">
                <div class="prov-title">Proveedores</div>
                <div class="prov-tree">
                    <div class="prow pl0"><i class="arr"></i><svg class="pi"><use href="#gpkg"/></svg>GeoPackage</div>
                    <div class="prow pl0"><i class="arr"></i><svg class="pi"><use href="#oracle"/></svg>Oracle Spatial</div>
                    <div class="prow pl0"><i class="arr arr-open"></i><svg class="pi"><use href="#pg"/></svg>PostGIS</div>
                    <div class="prow pl1"><i class="arr"></i><svg class="pi"><use href="#cyl"/></svg>QGISCloud</div>
                    <div class="prow pl1"><i class="arr"></i><svg class="pi"><use href="#cyl"/></svg>QGISCloud</div>
                    <div class="prow pl1"><i class="arr arr-open"></i><svg class="pi"><use href="#cyl"/></svg>cartografiaweb</div>
                    <div class="prow pl2 prow-sel"><i class="arr arr-open"></i><svg class="pi"><use href="#schema"/></svg>public</div>
                    <div class="prow pl3"><svg class="pi"><use href="#poly"/></svg>COL</div>
                    <div class="prow pl3"><svg class="pi"><use href="#poly"/></svg>Dep</div>
                    <div class="prow pl3"><svg class="pi"><use href="#pts"/></svg>EGE</div>
                    <div class="prow pl3"><svg class="pi"><use href="#line"/></svg>Fall</div>
                    <div class="prow pl3"><svg class="pi"><use href="#poly"/></svg>LI_D</div>
                    <div class="prow pl3"><svg class="pi"><use href="#poly"/></svg>LI_D</div>
                    <div class="prow pl3"><svg class="pi"><use href="#poly"/></svg>LI_D</div>
                    <div class="prow pl3"><svg class="pi"><use href="#poly"/></svg>Loc</div>
                    <div class="prow pl3"><svg class="pi"><use href="#pts"/></svg>Sitio</div>
                    <div class="prow pl3"><svg class="pi"><use href="#poly"/></svg>U1_</div>
                    <div class="prow pl3"><svg class="pi"><use href="#poly"/></svg>U3_</div>
                    <div class="prow pl3"><svg class="pi"><use href="#pts"/></svg>U3_</div>
                    <div class="prow pl3"><svg class="pi"><use href="#pts"/></svg>U3_</div>
                    <div class="prow pl3"><svg class="pi"><use href="#line"/></svg>U3_</div>
                    <div class="prow pl3"><svg class="pi"><use href="#line"/></svg>U3_</div>
                </div>
            </div>
            <div class="admin-right">
                <div class="admin-frame"><div class="pink-row"></div></div>
            </div>
        </div>
        <div class="admin-status"><svg class="grip-corner" viewBox="0 0 12 12"><path d="M10 2v1M6 6v1M10 6v1M2 10v1M6 10v1M10 10v1" stroke="#aaa"/></svg></div>
    </section>

    <section class="window dialog">
        <div class="win-title">
            <svg class="win-ico"><use href="#db"/></svg>Importar capa vectorial
            <svg class="dlg-close" viewBox="0 0 12 12"><path d="M1 1l10 10M11 1L1 11" stroke="#111"/></svg>
        </div>
        <div class="dlg-body">
            <div class="f-row f-entrada">
                <label class="lab-entrada">Entrada</label>
                <div class="combo combo-entrada">Limite<i class="combo-btn"><i class="drop-mini"></i></i></div>
                <span class="btn btn-dots">...</span>
            </div>
            <div class="f-row f-only">
                <span class="check"></span>
                <span class="only-text">Importar sólo objetos espaciales seleccionados</span>
                <span class="btn btn-update">Actualizar opciones</span>
            </div>
            <div class="hline"></div>

            <div class="grp-title grp-title-first">Tabla de salida</div>
            <div class="grp grp-out">
                <label>Esquema</label>
                <div class="combo combo-grad">public<i class="combo-arrow"><i class="drop-mini"></i></i></div>
                <label>Tabla</label>
                <div class="combo">Limite<i class="combo-btn"><i class="drop-mini"></i></i></div>
            </div>

            <div class="grp-title">Opciones</div>
            <div class="grp grp-opt">
                <div class="opt-row">
                    <span class="check"></span><label>Clave primaria</label>
                    <div class="combo is-off field">id</div>
                </div>
                <div class="opt-row">
                    <span class="check is-on"></span><label>Columna de geometría</label>
                    <div class="combo field">geom</div>
                </div>
                <div class="opt-row">
                    <span class="check"></span><label>SRID de origen</label>
                    <div class="crs is-off"><div class="combo combo-grad crs-combo"><span class="crs-text">USER:100000 -  * SRC generado (+proj=tmerc</span><i class="combo-arrow combo-arrow-off"><i class="drop-mini"></i></i></div><span class="btn btn-crs"><svg><use href="#globe-gray"/></svg></span></div>
                </div>
                <div class="opt-row">
                    <span class="check is-on"></span><label>SRID de destino</label>
                    <div class="crs"><div class="combo combo-grad crs-combo"><span class="crs-text">USER:100000 -  * SRC generado (+proj=tmerc</span><i class="combo-arrow"><i class="drop-mini"></i></i></div><span class="btn btn-crs"><svg><use href="#globe-pen"/></svg></span></div>
                </div>
                <div class="opt-row">
                    <span class="check"></span><label>Codificación</label>
                    <div class="combo is-off field">UTF-8<i class="combo-btn"><i class="drop-mini"></i></i></div>
                </div>
                <div class="opt-checks">
                    <div class="opt-single"><span class="check"></span><label>Sustituir la tabla de destino (si existe)</label></div>
                    <div class="opt-single"><span class="check"></span><label>Crear geometrías monoparte en vez de multiparte</label></div>
                    <div class="opt-single"><span class="check"></span><label>Pasar nombres de campos a minúsculas</label></div>
                    <div class="opt-single"><span class="check is-on"></span><label>Crear índice espacial</label></div>
                </div>
            </div>

            <div class="dlg-actions">
                <span class="btn btn-main btn-ok">Aceptar</span>
                <span class="btn btn-main">Cancelar</span>
            </div>
        </div>
    </section>

    <section class="call">
        <div class="call-top"></div>
        <div class="call-body">
            <div class="avatar"></div>
            <div class="call-ctrls">
                <b class="cbtn cbtn-light"><svg viewBox="0 0 24 24"><rect x="9" y="3" width="6" height="12" rx="3" fill="none" stroke="#666" stroke-width="1.300"/><path d="M6 11c0 7 12 7 12 0M12 17v4" fill="none" stroke="#666" stroke-width="1.300"/></svg></b>
                <b class="cbtn cbtn-dark"><svg viewBox="0 0 24 24"><path d="M3 7h13v11H3zM16 11l5-3v9l-5-3" fill="none" stroke="#eee" stroke-width="1.400"/><path d="M2 21L19 3" stroke="#eee" stroke-width="1.500"/></svg></b>
                <b class="cbtn cbtn-red"><svg viewBox="0 0 24 24"><path d="M2 14c0-6 20-6 20 0 0 2-4 2-5 1 0-2 0-3-1-3-2-1-6-1-8 0-1 0-1 1-1 3-1 1-5 1-5-1z" fill="#fff"/></svg></b>
                <b class="cbtn cbtn-light"><svg viewBox="0 0 24 24"><rect x="3" y="7" width="14" height="11" fill="#999"/></svg></b>
            </div>
        </div>
    </section>
</div>
</body>
</html>
```
FILE: styles.css
```css
* { box-sizing: border-box; }

html, body { height: 100%; }

body {
    margin: 0;
    overflow: hidden;
    font-family: "Noto Sans", "Open Sans", sans-serif;
    font-size: 11.5px;
    letter-spacing: -0.2px;
    color: #222;
}

.defs { position: absolute; width: 0; height: 0; }

svg text { letter-spacing: 0; }
.sv-a { font: 11px "Noto Sans", sans-serif; fill: #444; }
.sv-t { font: bold 7px "Noto Sans", sans-serif; fill: #777; text-anchor: middle; }
.sv-t2 { font: bold 15px "Liberation Serif", serif; fill: #333; text-anchor: middle; }
.sv-i { font: italic bold 14px "Liberation Serif", serif; fill: #fff; text-anchor: middle; }
.sv-i2 { font: italic bold 11px "Liberation Serif", serif; fill: #fff; text-anchor: middle; }
.sv-q { font: bold 15px "Liberation Sans", sans-serif; fill: #fff; text-anchor: middle; }
.sv-s { font: bold 16px "Liberation Sans", sans-serif; fill: #fff; text-anchor: middle; }
.sv-w { font: bold 10px "Liberation Sans", sans-serif; fill: #fff; text-anchor: middle; }

.screen {
    position: relative;
    display: flex;
    flex-direction: column;
    height: 768px;
    width: 1366px;
    padding: 3px;
    background: #d2172c;
    overflow: hidden;
}

/* barra de titulo */
.titlebar {
    display: flex;
    align-items: flex-start;
    flex: 0 0 20px;
    height: 20px;
    background: #fff;
    font-size: 12px;
    line-height: 17px;
    letter-spacing: -0.35px;
    color: #777;
}
.app-logo { width: 17px; height: 17px; }
.app-title { margin-left: 3px; }
.win-btns { display: flex; margin-left: auto; margin-right: -1px; }
.main-ctl { display: block; width: 46px; height: 17px; }
.win-ctl { width: 46px; height: 20px; display: block; }

/* menu */
.menubar {
    display: flex;
    align-items: center;
    gap: 14.5px;
    flex: 0 0 20px;
    padding-left: 7px;
    background: #f0f0f0;
    border-bottom: 1px solid #d4d4d4;
    color: #777;
    font-size: 11.5px;
}

/* barras de herramientas */
.toolbar {
    display: flex;
    align-items: center;
    flex: 0 0 39px;
    padding-left: 9.5px;
    background: linear-gradient(#f6f6f6, #efefef);
    border-bottom: 1px solid #bcbcbc;
}
.toolbar-2 { border-bottom: 2px solid #b4b4b4; flex-basis: 40px; }
.tb {
    display: flex;
    flex: 0 0 33px;
    height: 30px;
    align-items: center;
    justify-content: center;
}
.tb svg { width: 24px; height: 24px; }
.tb-on { background: #dcdcdc; border: 1px solid #b0b0b0; border-radius: 2px; }
.grip {
    flex: 0 0 3px;
    width: 3px;
    height: 24px;
    margin-left: -6px;
    margin-right: 3px;
    background-image: radial-gradient(#aaa 0.7px, transparent 0.8px);
    background-size: 3px 3px;
}
.grip-mid { margin: 0 4px 0 10px; }
.grip-end { margin: 0 4px 0 8px; }
.grip-sm { margin: 0 3px 0 9px; }
.drop { flex: 0 0 12.5px; height: 30px; position: relative; }
.drop::after {
    content: "";
    position: absolute;
    left: 1px;
    top: 13px;
    border: 4px solid transparent;
    border-top: 5px solid #555;
    border-bottom: 0;
}
.drop-off::after { border-top-color: #aaa; }
.tb-gap { flex: 0 0 704px; }

/* zona central */
.workspace { display: flex; flex: 0 0 578px; background: #f0f0f0; }
.side { display: flex; flex-direction: column; width: 480px; }
.side-title { flex: 0 0 18px; padding-left: 1px; line-height: 16px; font-size: 11.5px; }
.side-tools {
    display: flex;
    align-items: center;
    gap: 9.3px;
    flex: 0 0 32px;
    padding: 0 0 2px 4px;
    border-bottom: 1px solid #bbb;
}
.side-tools svg { width: 16px; height: 16px; }
.tree-wrap { display: flex; flex: 0 0 504px; background: #fff; border-bottom: 1px solid #bbb; overflow: hidden; }
.tree { flex: 1; letter-spacing: -0.25px; }
.row {
    display: flex;
    align-items: center;
    height: 18px;
    padding-bottom: 1px;
    white-space: nowrap;
    color: #222;
}
.lv0 { padding-left: 26px; }
.lv1 { padding-left: 46px; }
.lv2 { padding-left: 66px; }
.arr {
    flex: 0 0 auto;
    width: 0;
    height: 0;
    margin-right: 12px;
    border-left: 4px solid #555;
    border-top: 4px solid transparent;
    border-bottom: 4px solid transparent;
}
.arr-open {
    margin-left: -2px;
    margin-right: 10px;
    border-left: 4px solid transparent;
    border-right: 4px solid transparent;
    border-top: 5px solid #555;
    border-bottom: 0;
}
.arr-none { border-left-color: transparent; }
.fo { flex: 0 0 15px; width: 15px; height: 13px; margin-right: 6px; }
.vscroll { display: flex; flex-direction: column; flex: 0 0 15px; background: #f0f0f0; }
.thumb { flex: 1; background: #cdcdcd; margin-top: 10px; }
.vscroll-btn { flex: 0 0 16px; display: flex; align-items: center; justify-content: center; background: #f0f0f0; }
.drop-mini {
    display: block;
    width: 0;
    height: 0;
    border-left: 4px solid transparent;
    border-right: 4px solid transparent;
    border-top: 5px solid #555;
}
.tabs { display: flex; flex: 0 0 22px; font-size: 10.5px; }
.tab { width: 53px; padding: 2px 0 0 10px; background: #dedede; border: 1px solid #c4c4c4; border-top: 0; border-radius: 0 0 2px 2px; height: 21px; }
.tab-on { background: #f5f5f5; border-left: 0; padding-left: 8px; width: 75px; height: 22px; }

.map {
    position: relative;
    flex: 1;
    margin-left: 6px;
    background: #fff;
    border: 1px solid #bbb;
    border-right: 0;
    overflow: hidden;
}
.map-svg { position: absolute; left: -1px; top: -1px; width: 874px; height: 578px; }
.dept { fill: #e56d8e; stroke: #3d2a35; stroke-width: 2.6; }
.limits path { fill: none; stroke: #3d2a35; stroke-width: 2.8; }
.rivers path { fill: none; stroke: #f08a3c; stroke-width: 3; }
.rivers .river-thick { stroke-width: 9; stroke-dasharray: 8 3; }

/* barra de estado */
.statusbar {
    display: flex;
    align-items: center;
    flex: 0 0 28px;
    padding-left: 2px;
    background: #f0f0f0;
    font-size: 10.5px;
    letter-spacing: -0.05px;
    white-space: nowrap;
}
.locator {
    display: flex;
    align-items: center;
    flex: 0 0 254px;
    height: 21px;
    padding-left: 5px;
    gap: 6px;
    background: #fff;
    border: 1px solid #c4c4c4;
    border-radius: 3px;
    color: #777;
}
.locator svg { width: 15px; height: 15px; }
.st-msg { flex: 0 0 242px; margin-left: 7px; }
.st-coord { flex: 0 0 63px; }
.st-input {
    display: flex;
    align-items: center;
    position: relative;
    height: 21px;
    padding-left: 4px;
    background: #fff;
    border: 1px solid #bbb;
    border-radius: 2px;
}
.st-input-coord { flex: 0 0 92px; }
.st-ico { flex: 0 0 18px; height: 18px; margin: 0 12px 0 2px; }
.st-scale { flex: 0 0 34px; }
.st-input-scale { flex: 0 0 81px; padding-left: 1px; }
.st-drop {
    display: flex;
    align-items: center;
    justify-content: center;
    position: absolute;
    right: 0;
    top: 0;
    bottom: 0;
    width: 19px;
    border-left: 1px solid #ccc;
}
.st-lock { flex: 0 0 14px; height: 18px; margin: 0 9px 0 11px; }
.st-amp { flex: 0 0 57px; letter-spacing: -0.5px; }
.st-input-mag { flex: 0 0 86px; margin-left: 5px; }
.st-rot { flex: 0 0 52px; margin-left: 9px; }
.st-input-rot { flex: 0 0 84px; }
.spin { position: absolute; right: 3px; top: 5px; height: 11px; width: 7px; }
.spin::before, .spin::after {
    content: "";
    position: absolute;
    left: 0;
    border-left: 3.5px solid transparent;
    border-right: 3.5px solid transparent;
}
.spin::before { top: 0; border-bottom: 4px solid #555; }
.spin::after { bottom: 0; border-top: 4px solid #555; }
.check-st { margin-left: 7px; }
.st-render { flex: 0 0 60px; margin-left: 4px; }
.st-globe { flex: 0 0 15px; height: 15px; margin: 0 4px 0 17px; }
.st-crs { flex: 0 0 67px; }
.st-msgicon { flex: 0 0 18px; height: 18px; margin-left: 17px; }

/* barra de tareas */
.taskbar {
    display: flex;
    align-items: center;
    flex: 0 0 37px;
    background: #1f3140;
    color: #fff;
    letter-spacing: 0;
}
.start { display: flex; align-items: center; justify-content: center; width: 45px; height: 37px; }
.start svg { width: 16px; height: 16px; }
.search {
    display: flex;
    align-items: center;
    gap: 14px;
    width: 344px;
    height: 37px;
    padding: 1px 0 0 11px;
    background: #f2f2f2;
    color: #333;
    font-size: 14.5px;
}
.search svg { width: 16px; height: 16px; }
.task-apps { display: flex; }
.app { display: flex; align-items: center; justify-content: center; width: 49px; height: 37px; }
.app svg { width: 24px; height: 24px; }
.app:first-child svg, .app:nth-child(2) svg { width: 20px; height: 20px; }
.app-on { background: #3d4f5c; width: 44px; margin-left: 2px; }
.tray { display: flex; align-items: center; margin-left: 92px; height: 37px; }
.tray svg { display: block; }
.t-caret { width: 12px; height: 8px; }
.t-cloud { width: 16px; height: 12px; margin-left: 11px; }
.t-mic { width: 11px; height: 19px; margin-left: 9px; }
.t-batt { width: 17px; height: 13px; margin-left: 10px; }
.t-net { width: 17px; height: 15px; margin-left: 8px; }
.t-vol { width: 16px; height: 15px; margin-left: 8px; }
.t-lang { margin-left: 10px; font-size: 11.5px; }
.clock { display: flex; flex-direction: column; align-items: center; margin-left: 13px; width: 66px; font-size: 11.5px; line-height: 18px; }
.t-note { width: 16px; height: 16px; margin-left: 16px; }

/* ventanas */
.window {
    position: absolute;
    display: flex;
    flex-direction: column;
    background: #f0f0f0;
    border: 1px solid #707070;
    box-shadow: 0 0 14px rgba(0, 0, 0, .4);
}
.win-title {
    position: relative;
    display: flex;
    align-items: center;
    flex: 0 0 29px;
    padding-left: 7px;
    padding-bottom: 1px;
    background: #fff;
    font-size: 12px;
    letter-spacing: -0.15px;
    color: #222;
}
.win-title-dim { color: #777; }
.win-ico { width: 16px; height: 16px; margin-right: 5px; }
.dlg-close { position: absolute; right: 9px; top: 7px; width: 12px; height: 12px; }

.admin { left: 333px; top: 83px; width: 700px; height: 532px; border-color: #bbb; }
.admin .win-title { padding-left: 6px; padding-bottom: 0; }
.admin .win-ico { margin-right: 6px; }
.admin-name { width: 100px; overflow: hidden; white-space: nowrap; }
.admin-ctls { display: flex; margin-left: auto; }
.admin-menu { display: flex; align-items: center; gap: 13px; flex: 0 0 20px; padding: 1px 0 0 9px; color: #777; border-bottom: 1px solid #d4d4d4; }
.admin-esq { width: 28px; overflow: hidden; white-space: nowrap; }
.admin-tools { display: flex; align-items: center; flex: 0 0 38px; padding-left: 6px; border-bottom: 1px solid #ccc; }
.admin-tools .grip { margin: 0 6px 0 0; }
.at-ico { width: 24px; height: 24px; }
.at-props { margin-left: 9px; }
.at-sep { width: 1px; height: 24px; background: #d0d0d0; margin: 0 10px; }
.at-db { width: 26px; height: 26px; }
.at-label { width: 6px; overflow: hidden; }
.admin-body { display: flex; flex: 1; }
.providers { display: flex; flex-direction: column; width: 126px; }
.prov-title { flex: 0 0 21px; padding: 3px 0 0 3px; line-height: 16px; font-size: 12px; }
.prov-tree { flex: 1; margin-left: 1px; background: #fff; border: 1px solid #c0c0c0; overflow: hidden; }
.prow { display: flex; align-items: center; height: 18px; white-space: nowrap; }
.prow-sel { background: #f0f0f0; }
.pl0 { padding-left: 6px; }
.pl1 { padding-left: 27px; }
.pl2 { padding-left: 47px; }
.pl3 { padding-left: 81px; }
.pi { flex: 0 0 18px; width: 18px; height: 16px; margin-right: 5px; margin-left: -2px; }
.prow .arr { margin-right: 12px; }
.prow .arr-open { margin-right: 10px; }
.admin-right { flex: 1; padding: 26px 1px 0 0; }
.admin-frame { height: 394px; background: #fff; border: 1px solid #a8a8a8; padding: 5px 4px 0 0; box-shadow: inset 0 0 0 1px #ddd; }
.pink-row { height: 27px; background: #ffcdd0; }
.admin-status { position: relative; flex: 0 0 23px; border-top: 1px solid #c4c4c4; }
.grip-corner { position: absolute; right: 1px; bottom: 1px; width: 12px; height: 12px; }

.dialog { left: 458px; top: 82px; width: 451px; height: 536px; border-color: #555; }
.dlg-body {
    flex: 1;
    display: flex;
    flex-direction: column;
    padding: 20px 11px 0;
    font-family: Roboto, "Noto Sans", sans-serif;
    font-size: 11.5px;
    letter-spacing: -0.33px;
}
.f-row { display: flex; align-items: center; }
.f-entrada { height: 22px; padding-left: 7px; }
.lab-entrada { width: 45px; }
.combo {
    position: relative;
    display: flex;
    align-items: center;
    height: 22px;
    padding-left: 3px;
    background: #fff;
    border: 1px solid #b0b0b0;
    border-radius: 2px;
}
.combo-entrada { width: 337px; padding-left: 2px; }
.combo-grad { background: linear-gradient(#f8f8f8, #ececec); }
.combo-btn {
    position: absolute;
    right: 0;
    top: 0;
    bottom: 0;
    width: 21px;
    display: flex;
    align-items: center;
    justify-content: center;
    background: #f0f0f0;
    border-left: 1px solid #ccc;
}
.combo-arrow {
    position: absolute;
    right: 5px;
    top: 7px;
}
.combo-arrow-off .drop-mini { border-top-color: #aaa; }
.btn {
    display: flex;
    align-items: center;
    justify-content: center;
    white-space: nowrap;
    background: linear-gradient(#fafafa, #efefef);
    border: 1px solid #b4b4b4;
    border-radius: 3px;
}
.btn-dots { width: 23px; height: 21px; margin-left: 6px; color: #555; }
.f-only { height: 21px; margin-top: 6px; padding-left: 8px; }
.check {
    position: relative;
    flex: 0 0 14px;
    width: 14px;
    height: 14px;
    background: #fff;
    border: 1px solid #b4b4b4;
    border-radius: 1px;
}
.check.is-on::after {
    content: "";
    position: absolute;
    left: 4px;
    top: 1px;
    width: 4px;
    height: 8px;
    border: solid #111;
    border-width: 0 2px 2px 0;
    transform: rotate(38deg);
}
.only-text { margin-left: 4px; }
.btn-update { width: 100px; height: 21px; margin-left: auto; margin-right: 9px; }
.hline { height: 1px; margin: 6px 9px 0 8px; background: #a8a8a8; }
.grp-title { height: 16px; margin-top: 6px; line-height: 16px; }
.grp-title-first { margin-top: 17px; }
.grp { margin-top: 2px; background: #ececec; border: 1px solid #dcdcdc; border-radius: 2px; }
.grp-out {
    display: grid;
    grid-template-columns: 49px 1fr;
    grid-auto-rows: 22px;
    row-gap: 6px;
    align-items: center;
    height: 73px;
    padding: 10px 11px 0 9px;
}
.grp-opt {
    display: flex;
    flex-direction: column;
    gap: 6.5px;
    height: 258px;
    padding: 10px 11px 0 10px;
}
.opt-row { display: flex; align-items: center; height: 22px; }
.opt-row label { margin-left: 4px; width: 120px; }
.field { flex: 1; }
.field .combo-btn { width: 21px; }
.is-off { color: #888; background: #eaeaea; }
.is-off .drop-mini { border-top-color: #aaa; }
.crs { display: flex; flex: 1; gap: 6px; height: 22px; background: none; }
.crs-combo { width: 236px; overflow: hidden; }
.crs.is-off .crs-combo { color: #888; }
.crs-text { display: block; width: 211px; white-space: pre; overflow: hidden; letter-spacing: 0; }
.btn-crs { width: 24px; height: 22px; }
.btn-crs svg { width: 20px; height: 20px; }
.opt-checks { margin-top: -3px; }
.opt-single { display: flex; align-items: center; height: 25px; }
.opt-single label { margin-left: 4px; }
.dlg-actions { display: flex; justify-content: flex-end; gap: 7px; margin-top: 7px; padding-right: 1px; }
.btn-main { width: 79px; height: 21px; }
.btn-ok { background: #e6f1fa; border-color: #4a9ad4; }

/* ventana de llamada */
.call {
    position: absolute;
    left: 1107px;
    top: 217px;
    display: flex;
    flex-direction: column;
    width: 256px;
    height: 180px;
    background: #202124;
    box-shadow: 0 0 10px rgba(0, 0, 0, .35);
    overflow: hidden;
}
.call-top { flex: 0 0 30px; background: #1a1a1c; }
.call-body { display: flex; flex-direction: column; align-items: flex-start; flex: 1; }
.avatar { width: 80px; height: 80px; margin: 10px 0 0 103.5px; background: #000; border-radius: 50%; }
.call-ctrls { display: flex; gap: 39.3px; margin: 15px 0 0 5px; }
.cbtn { display: flex; flex: 0 0 40px; align-items: center; justify-content: center; width: 40px; height: 40px; border-radius: 50%; }
.cbtn svg { width: 24px; height: 24px; }
.cbtn-light { background: #fff; }
.cbtn-dark { background: #1a1a1c; }
.cbtn-red { background: #ea4335; }
```
